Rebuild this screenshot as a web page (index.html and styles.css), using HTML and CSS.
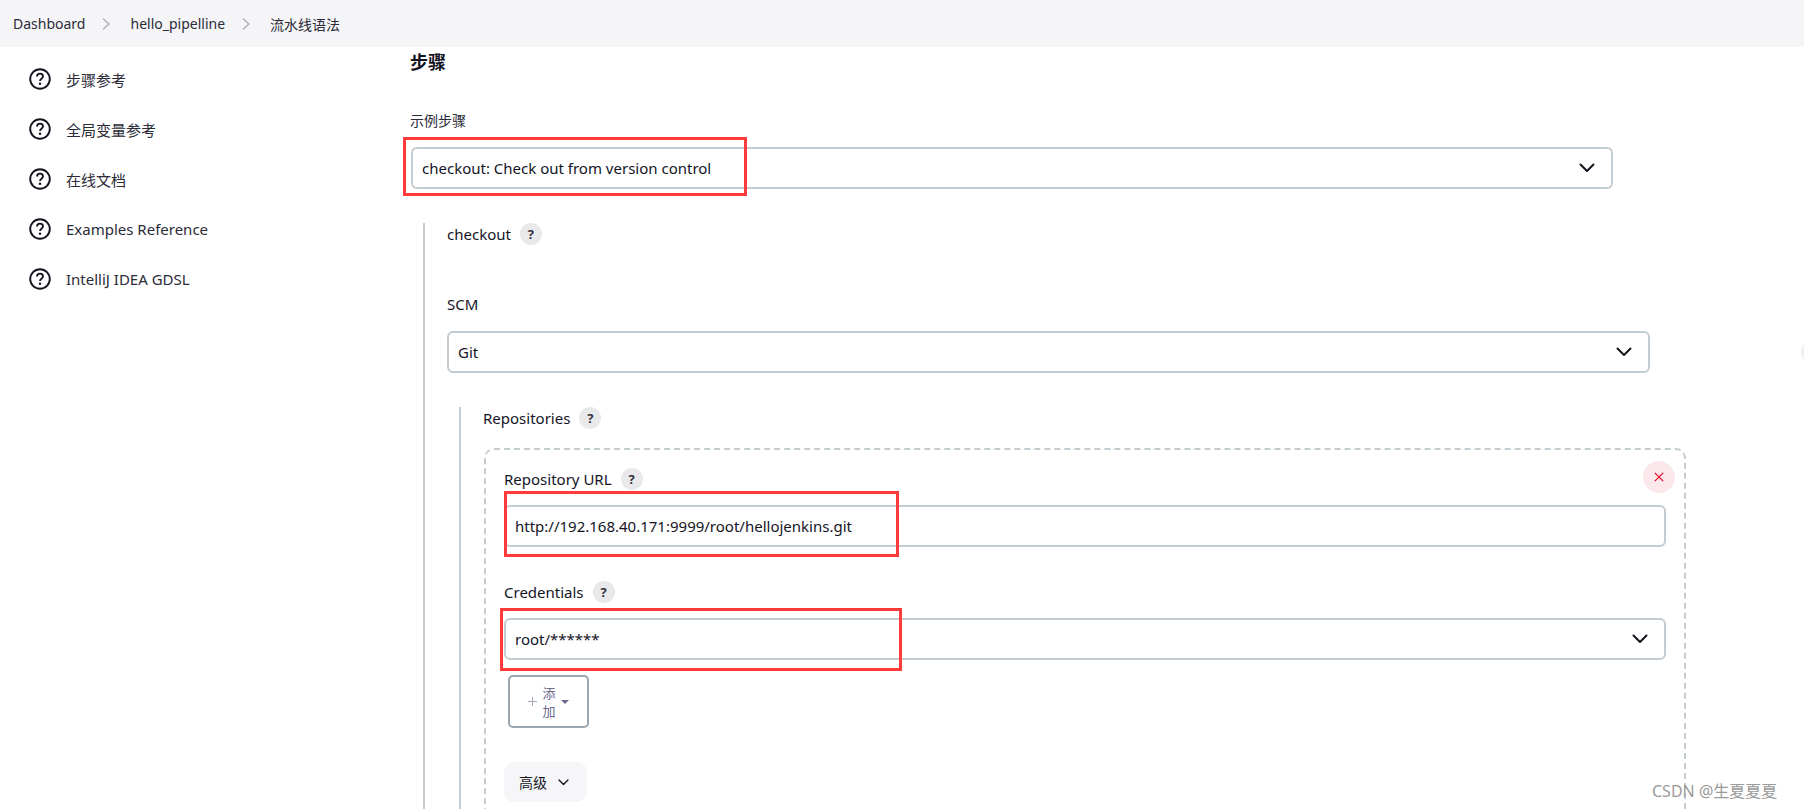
FILE: index.html
```html
<!DOCTYPE html>
<html lang="en">
<head>
    <meta charset="UTF-8">
    <meta name="viewport" content="width=device-width, initial-scale=1.0">
    <title>流水线语法</title>
    <link rel="stylesheet" href="styles.css">
</head>
<body>
    <svg class="icon-defs" width="0" height="0">
        <symbol id="chevron" viewBox="0 0 16 10">
            <path d="M1.5 1.5 8 8l6.5-6.5" fill="none" stroke="currentColor" stroke-width="2" stroke-linecap="round" stroke-linejoin="round"/>
        </symbol>
        <symbol id="crumb-arrow" viewBox="0 0 8 12">
            <path d="M1 .8 7 6l-6 5.2" fill="none" stroke="currentColor" stroke-width="1.2"/>
        </symbol>
        <symbol id="help" viewBox="0 0 22 22">
            <circle cx="11" cy="11" r="9.8" fill="none" stroke="currentColor" stroke-width="1.9"/>
            <path d="M8 8.6c0-1.9 1.300-3 3-3s3 1.100 3 2.700c0 2.300-3 2.400-3 4.700" fill="none" stroke="currentColor" stroke-width="1.900"/>
            <circle cx="11" cy="15.700" r="1.250" fill="currentColor"/>
        </symbol>
    </svg>

    <div class="breadcrumb">
        <a href="#">Dashboard</a>
        <svg class="crumb-arrow"><use href="#crumb-arrow"/></svg>
        <a href="#">hello_pipelline</a>
        <svg class="crumb-arrow"><use href="#crumb-arrow"/></svg>
        <a href="#">流水线语法</a>
    </div>

    <div class="page">
        <div class="sidebar">
            <ul>
                <li><svg class="help-icon"><use href="#help"/></svg><a href="#">步骤参考</a></li>
                <li><svg class="help-icon"><use href="#help"/></svg><a href="#">全局变量参考</a></li>
                <li><svg class="help-icon"><use href="#help"/></svg><a href="#">在线文档</a></li>
                <li><svg class="help-icon"><use href="#help"/></svg><a href="#">Examples Reference</a></li>
                <li><svg class="help-icon"><use href="#help"/></svg><a href="#">IntelliJ IDEA GDSL</a></li>
            </ul>
        </div>

        <div class="main-content">
            <h2 class="section-title">步骤</h2>

            <div class="label label-sample">示例步骤</div>
            <div class="field field-sample">
                <div class="control">
                    <span>checkout: Check out from version control</span>
                    <svg class="chevron"><use href="#chevron"/></svg>
                </div>
                <div class="marker marker-sample"></div>
            </div>

            <div class="nested nested-step">
                <div class="label-row">
                    <span>checkout</span>
                    <span class="help-badge">?</span>
                </div>

                <div class="label label-scm">SCM</div>
                <div class="field field-scm">
                    <div class="control">
                        <span>Git</span>
                        <svg class="chevron"><use href="#chevron"/></svg>
                    </div>
                </div>

                <div class="nested nested-scm">
                    <div class="label-row">
                        <span>Repositories</span>
                        <span class="help-badge">?</span>
                    </div>

                    <div class="repo-card">
                        <button class="delete-btn">
                            <svg width="10" height="10" viewBox="0 0 10 10"><path d="M.8.8l8.400 8.400M9.200.8.8 9.200" fill="none" stroke="currentColor" stroke-width="1.200"/></svg>
                        </button>

                        <div class="label-row">
                            <span>Repository URL</span>
                            <span class="help-badge">?</span>
                        </div>
                        <div class="field field-repo">
                            <div class="control">
                                <span>http://192.168.40.171:9999/root/hellojenkins.git</span>
                            </div>
                            <div class="marker marker-url"></div>
                        </div>

                        <div class="label-row label-credentials">
                            <span>Credentials</span>
                            <span class="help-badge">?</span>
                        </div>
                        <div class="field field-repo">
                            <div class="control">
                                <span>root/******</span>
                                <svg class="chevron"><use href="#chevron"/></svg>
                            </div>
                            <div class="marker marker-credentials"></div>
                        </div>

                        <button class="add-btn">
                            <svg class="plus" width="9" height="9" viewBox="0 0 9 9"><path d="M4.500 0v9M0 4.500h9" fill="none" stroke="currentColor" stroke-width="1"/></svg>
                            <span class="add-text">添加</span>
                            <span class="add-caret"></span>
                        </button>

                        <button class="advanced-btn">
                            <span>高级</span>
                            <svg class="chevron-small"><use href="#chevron"/></svg>
                        </button>
                    </div>
                </div>
            </div>
        </div>
    </div>

    <div class="edge-badge"></div>
    <div class="watermark">CSDN @生夏夏夏</div>
</body>
</html>
```

FILE: styles.css
```css
* {
    margin: 0;
    padding: 0;
    box-sizing: border-box;
    font-family: "Noto Sans", "Noto Sans CJK SC", sans-serif;
}

html, body {
    height: 809px;
    overflow: hidden;
}

body {
    background-color: #fff;
    color: #14141f;
    font-size: 15px;
    position: relative;
}

a {
    color: inherit;
    text-decoration: none;
}

button {
    border: none;
    background: none;
    cursor: pointer;
    color: inherit;
}

.icon-defs {
    position: absolute;
}

.breadcrumb {
    height: 47px;
    background-color: #f5f5f7;
    display: flex;
    align-items: center;
    padding-left: 13px;
    font-size: 14px;
    color: #2b2b38;
}

.crumb-arrow {
    width: 8px;
    height: 12px;
    color: #a9a9b8;
    margin: 0 20px 0 17px;
}

.page {
    display: flex;
}

.sidebar {
    width: 410px;
    flex-shrink: 0;
    padding: 7px 0 0 29px;
}

.sidebar ul {
    list-style-type: none;
}

.sidebar li {
    height: 50px;
    display: flex;
    align-items: center;
    font-size: 15px;
    color: #2b2b38;
}

.help-icon {
    width: 22px;
    height: 22px;
    color: #14141f;
    margin-right: 15px;
}

.main-content {
    flex: 1;
    padding: 3px 118px 0 0;
}

.section-title {
    font-size: 18px;
    line-height: 24px;
    font-weight: 700;
}

.label {
    line-height: 22px;
}

.label-sample {
    margin-top: 36px;
    margin-bottom: 15px;
    font-size: 14px;
    color: #2b2b38;
}

.label-scm {
    margin-top: 48px;
    margin-bottom: 16px;
}

.label-row {
    display: flex;
    align-items: center;
    height: 22px;
    gap: 9px;
}

.help-badge {
    width: 22px;
    height: 22px;
    border-radius: 50%;
    background-color: #e9e9eb;
    font-size: 13px;
    font-weight: 700;
    color: #33333f;
    display: flex;
    align-items: center;
    justify-content: center;
}

.field {
    position: relative;
}

.field-sample {
    margin-left: 1px;
    margin-right: 73px;
}

.field-scm {
    margin-right: 36px;
}

.field-repo {
    margin-top: 15px;
}

.control {
    height: 42px;
    border: 2px solid #c3ccd1;
    border-radius: 6px;
    background-color: #fff;
    display: flex;
    align-items: center;
    justify-content: space-between;
    padding: 0 16px 0 9px;
    font-size: 15px;
}

.chevron {
    width: 16px;
    height: 10px;
    color: #14141f;
}

.marker {
    position: absolute;
    border: 3px solid #ff3b3b;
    pointer-events: none;
}

.marker-sample {
    left: -8px;
    top: -10px;
    width: 344px;
    height: 59px;
}

.marker-url {
    left: 0;
    top: -14px;
    width: 395px;
    height: 66px;
}

.marker-credentials {
    left: -4px;
    top: -10px;
    width: 402px;
    height: 63px;
}

.nested {
    border-left: 2px solid #c3ccd1;
    padding-left: 22px;
}

.nested-step {
    margin: 34px 0 0 13px;
}

.nested-scm {
    margin: 34px 0 0 12px;
}

.repo-card {
    position: relative;
    margin: 19px 0 0 1px;
    padding: 18px 18px 30px 18px;
    border: 2px dashed #c3ccd1;
    border-radius: 10px;
}

.delete-btn {
    position: absolute;
    top: 11px;
    right: 9px;
    width: 32px;
    height: 32px;
    border-radius: 50%;
    background-color: #fae8ea;
    color: #e6001f;
    display: flex;
    align-items: center;
    justify-content: center;
}

.label-credentials {
    margin-top: 34px;
}

.add-btn {
    margin: 15px 0 0 4px;
    width: 81px;
    height: 53px;
    border: 2px solid #9aa7b0;
    border-radius: 5px;
    display: flex;
    align-items: center;
    justify-content: center;
    color: #6b6a8c;
    font-size: 13px;
}

.plus {
    color: #a8a8ba;
    margin-right: 4px;
}

.add-text {
    width: 16px;
    line-height: 18px;
    text-align: center;
}

.add-caret {
    margin-left: 4px;
    border-left: 4px solid transparent;
    border-right: 4px solid transparent;
    border-top: 4px solid #6b6a8c;
}

.advanced-btn {
    display: flex;
    align-items: center;
    gap: 11px;
    margin-top: 34px;
    width: 83px;
    height: 40px;
    padding-left: 15px;
    border-radius: 10px;
    background-color: #f6f6f8;
    font-size: 14px;
}

.chevron-small {
    width: 11px;
    height: 7px;
    color: #14141f;
}

.edge-badge {
    position: absolute;
    left: 1801px;
    top: 341px;
    width: 22px;
    height: 22px;
    border-radius: 50%;
    background-color: #eeeeef;
}

.watermark {
    position: absolute;
    left: 1652px;
    top: 780px;
    font-size: 16px;
    line-height: 22px;
    color: #9a9a9a;
    white-space: nowrap;
}
```
